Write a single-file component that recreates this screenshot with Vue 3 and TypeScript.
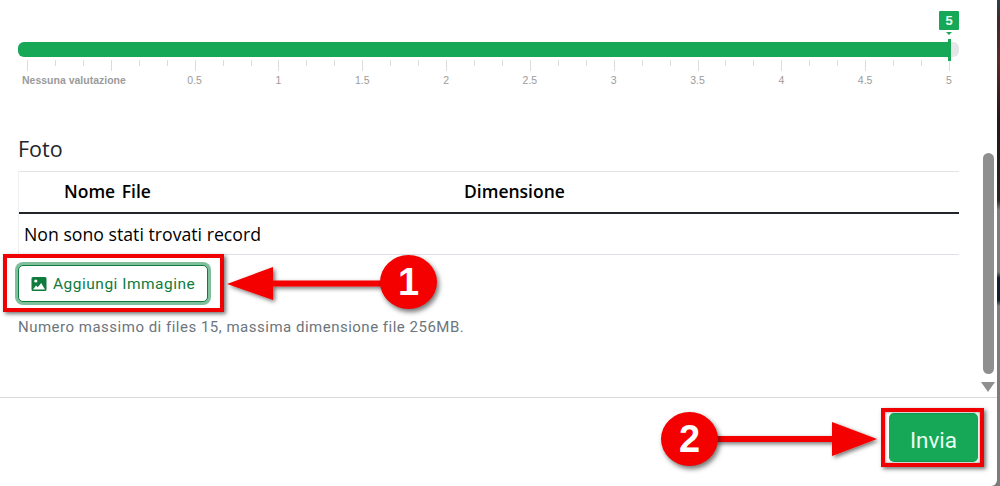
<script setup lang="ts">
const ticks = Array.from({ length: 34 }, (_, i) => i)
const labels = ['Nessuna valutazione', '', '0.5', '1', '1.5', '2', '2.5', '3', '3.5', '4', '4.5', '5']
</script>

<template>
  <div class="page">
    <div class="modal">
      <div class="scroll">
        <div class="body">
          <div class="slider">
            <div class="bubble">5</div>
            <div class="track">
              <div class="fill"></div>
              <div class="handle"></div>
            </div>
            <div class="ticks">
              <span v-for="t in ticks" :key="t" class="tick" :class="{ major: t % 3 === 0 }"></span>
            </div>
            <div class="labels">
              <span v-for="(l, i) in labels" :key="i" class="label" :class="{ first: i === 0 }">{{ l }}</span>
            </div>
          </div>

          <h2 class="title">Foto</h2>
          <div class="table">
            <div class="thead">
              <span class="col-name">Nome File</span>
              <span class="col-size">Dimensione</span>
            </div>
            <div class="tbody">Non sono stati trovati record</div>
          </div>

          <button class="add">
            <svg class="img-icon" viewBox="0 0 16 16" width="16" height="16">
              <path fill="#0f7b3d" fill-rule="evenodd" d="M2 1h12a1.500 1.500 0 0 1 1.500 1.500v11A1.500 1.500 0 0 1 14 15H2a1.500 1.500 0 0 1-1.500-1.500v-11A1.500 1.500 0 0 1 2 1zm2.800 2.400a1.600 1.600 0 1 0 0 3.200 1.600 1.600 0 0 0 0-3.200zM2 13.500h12L10.200 7 6.800 11.300 5 9.500z"/>
            </svg>
            <span>Aggiungi Immagine</span>
          </button>
          <p class="hint">Numero massimo di files 15, massima dimensione file 256MB.</p>
        </div>
        <div class="scrollbar">
          <div class="thumb"></div>
          <div class="arrow"></div>
        </div>
      </div>
      <div class="footer">
        <button class="send">Invia</button>
      </div>
    </div>

    <!-- Screenshot annotations -->
    <div class="mark mark-add"></div>
    <div class="mark mark-send"></div>
    <svg class="arrows" viewBox="0 0 1000 486" width="1000" height="486">
      <defs>
        <filter id="sh" x="-20%" y="-20%" width="140%" height="140%">
          <feDropShadow dx="2" dy="2" stdDeviation="2" flood-color="#000" flood-opacity="0.55" />
        </filter>
      </defs>
      <g filter="url(#sh)">
        <path fill="#f50000" d="M227 284 L273 267 V280.500 H385 V286.500 H273 V300 Z" />
        <path fill="#f50000" d="M715 436 H832 V422 L877 439 L832 456 V442 H715 Z" />
      </g>
    </svg>
    <div class="badge badge-1">1</div>
    <div class="badge badge-2">2</div>
  </div>
</template>

<style scoped>
.page {
  position: relative;
  width: 1000px;
  height: 486px;
  background: linear-gradient(
    180deg,
    #2c4048 0,
    #3a2a2c 20px,
    #5a2a2a 60px,
    #20181a 120px,
    #2a2422 200px,
    #7c7c7c 210px,
    #7c7c7c 272px,
    #141c30 278px,
    #141c30 300px,
    #7c7c7c 306px,
    #7c7c7c 100%
  );
  overflow: hidden;
  font-family: "Open Sans", "Noto Sans", sans-serif;
}
.modal {
  width: 997px;
  height: 486px;
  background: #fff;
  border-bottom-right-radius: 6px;
  display: flex;
  flex-direction: column;
}
.scroll {
  height: 397px;
  display: flex;
  border-bottom: 1px solid #dcdcdc;
}
.body {
  width: 941px;
  margin-left: 18px;
  flex: none;
}
.slider {
  height: 133px;
  padding-top: 11px;
  box-sizing: border-box;
}
.bubble {
  width: 20px;
  height: 19px;
  margin-left: 921px;
  background: #16a757;
  color: #e8fff0;
  font: bold 13px/19px "Liberation Sans", sans-serif;
  text-align: center;
  position: relative;
  border-radius: 1px;
}
.bubble::after {
  content: "";
  position: absolute;
  left: 7px;
  top: 21px;
  border: 3px solid transparent;
  border-top: 3px solid #16a757;
  border-bottom: 0;
}
.track {
  position: relative;
  height: 15px;
  margin-top: 12px;
  background: #e4e6e8;
  border-radius: 6px;
}
.fill {
  width: 931px;
  height: 100%;
  background: #16a757;
  border-radius: 6px 0 0 6px;
}
.handle {
  position: absolute;
  left: 930px;
  top: -3px;
  width: 3px;
  height: 22px;
  background: #16a757;
}
.ticks {
  display: flex;
  justify-content: space-between;
  width: 923px;
  margin: 3px 0 0 9px;
  height: 11px;
}
.tick {
  width: 1px;
  height: 6px;
  background: #dcdcdc;
}
.tick.major {
  height: 11px;
}
.labels {
  position: relative;
  display: flex;
  justify-content: space-between;
  width: 922px;
  margin: 2px 0 0 9px;
  height: 14px;
}
.label {
  width: 0;
  display: flex;
  justify-content: center;
  white-space: nowrap;
  font: 10.500px/14px "Liberation Sans", sans-serif;
  color: #9b9b9b;
}
.label.first {
  justify-content: flex-start;
  margin-left: -5px;
  margin-right: 5px;
  font-weight: 700;
}
.title {
  margin: 0;
  height: 38px;
  font-size: 21.500px;
  line-height: 31px;
  font-weight: 500;
  color: #212529;
}
.table {
  width: 941px;
  border-top: 1px solid #e2e3e4;
  border-left: 1px solid #f0f0f0;
  box-sizing: border-box;
  font-size: 17.500px;
  color: #000;
}
.thead {
  display: flex;
  height: 42px;
  padding-bottom: 2px;
  box-sizing: border-box;
  align-items: center;
  border-bottom: 2px solid #212529;
  font-weight: 600;
}
.col-name {
  margin-left: 45px;
  width: 400px;
  word-spacing: 2px;
}
.tbody {
  height: 41px;
  line-height: 41px;
  padding-left: 5px;
  box-sizing: border-box;
  border-bottom: 1px solid #dee2e6;
  font-size: 17.700px;
}
.add {
  display: flex;
  align-items: center;
  gap: 6px;
  width: 190px;
  height: 37px;
  margin-top: 10px;
  padding: 0 0 0 12px;
  box-sizing: border-box;
  background: #fff;
  border: 1px solid #0f7b3d;
  border-radius: 5px;
  box-shadow: 0 0 0 3px #7fbf9b;
  color: #0f7b3d;
  font: 15.500px "Roboto", sans-serif;
  letter-spacing: 0.5px;
}
.img-icon {
  flex: none;
}
.hint {
  margin: 15px 0 0;
  font: 15px/20px "Roboto", sans-serif;
  letter-spacing: 0.5px;
  color: #6c757d;
}
.scrollbar {
  width: 14px;
  margin-left: 22px;
  padding-top: 153px;
  display: flex;
  flex-direction: column;
  align-items: center;
}
.thumb {
  width: 11px;
  height: 221px;
  background: #8f8f8f;
  border-radius: 6px;
}
.arrow {
  margin-top: 8px;
  border-top: 10px solid #8f8f8f;
  border-left: 7px solid transparent;
  border-right: 7px solid transparent;
}
.footer {
  flex: 1;
  display: flex;
  justify-content: flex-end;
  padding: 15px 19px 0 0;
}
.send {
  width: 89px;
  height: 49px;
  padding-top: 6px;
  border: 0;
  border-radius: 5px;
  background: #16a757;
  color: #e8fff0;
  font: 22.500px "Roboto", sans-serif;
}
.mark {
  position: absolute;
  box-sizing: border-box;
  border: 4px solid #f00000;
  box-shadow: 2px 2px 4px rgba(0, 0, 0, 0.55);
}
.mark-add {
  left: 3px;
  top: 254px;
  width: 221px;
  height: 58px;
}
.mark-send {
  left: 881px;
  top: 408px;
  width: 103px;
  height: 59px;
  box-shadow: 2px 2px 4px rgba(0, 0, 0, 0.55), inset 0 0 3px rgba(0, 0, 0, 0.5);
}
.arrows {
  position: absolute;
  left: 0;
  top: 0;
  pointer-events: none;
}
.badge {
  position: absolute;
  width: 57px;
  height: 54px;
  border-radius: 50%;
  background: #f50000;
  color: #fff;
  font: bold 38px/54px "Liberation Sans", sans-serif;
  text-align: center;
  box-shadow: 2px 3px 5px rgba(0, 0, 0, 0.55);
}
.badge-1 {
  left: 380px;
  top: 255px;
}
.badge-2 {
  left: 661px;
  top: 412px;
}
</style>
